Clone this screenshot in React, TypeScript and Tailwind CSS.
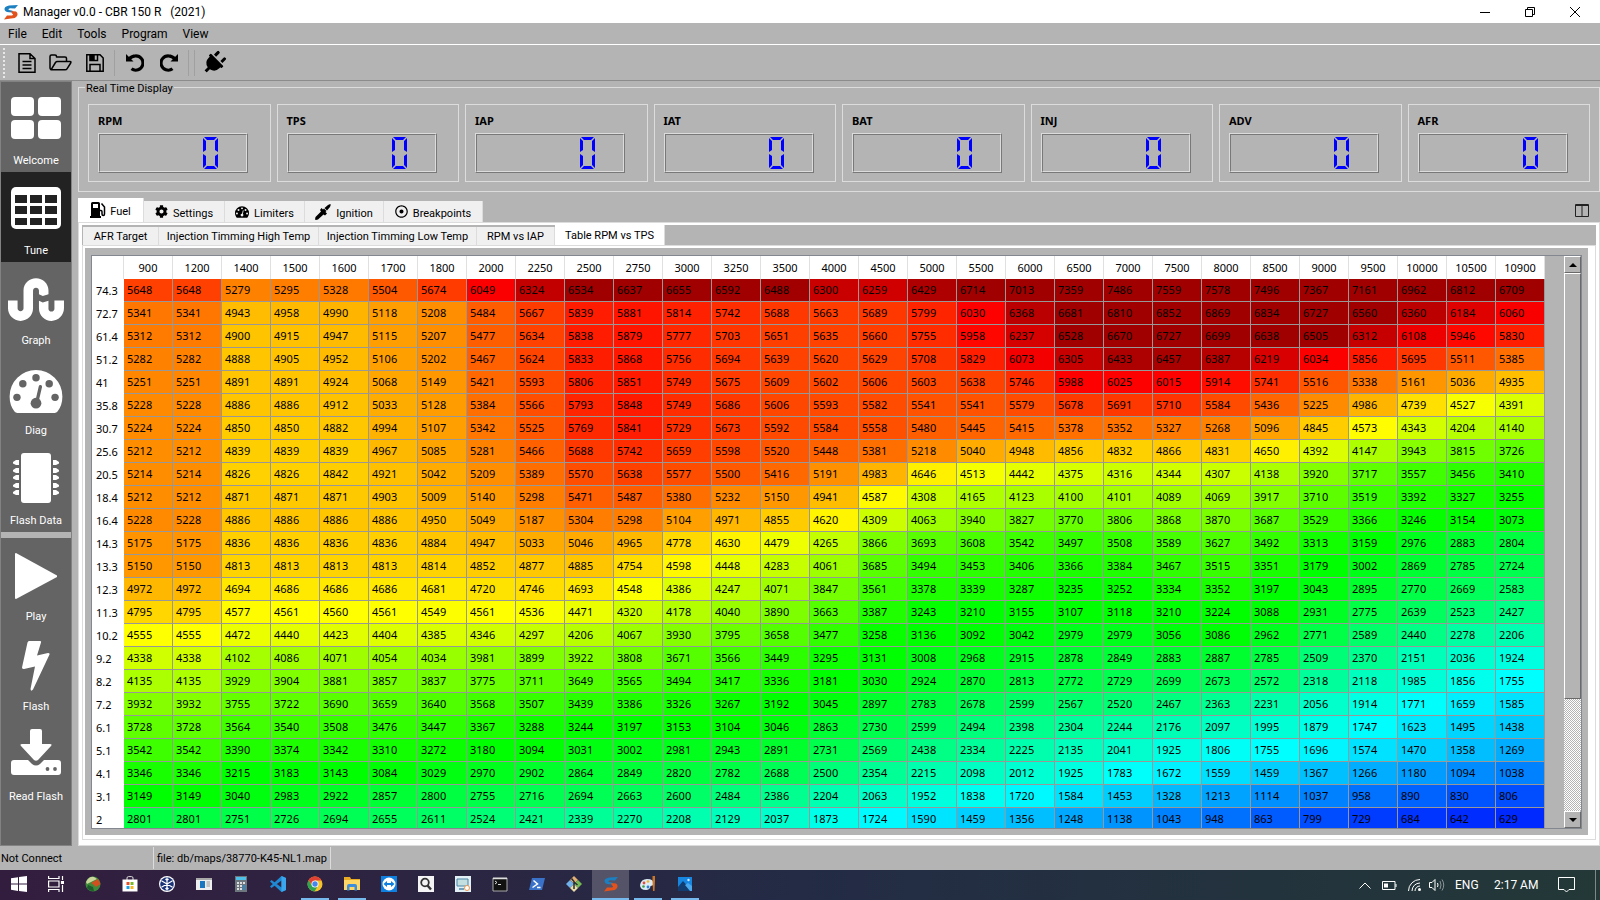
import type { ReactNode } from "react";
import { FaCog, FaPlug, FaRegDotCircle, FaStumbleupon } from "react-icons/fa";

const columns = [
  900, 1200, 1400, 1500, 1600, 1700, 1800, 2000, 2250, 2500, 2750, 3000, 3250, 3500, 4000, 4500, 5000, 5500, 6000,
  6500, 7000, 7500, 8000, 8500, 9000, 9500, 10000, 10500, 10900,
];

// first number is the TPS breakpoint, the rest are the fuel values per RPM
const fuelMap = `
74.3 5648 5648 5279 5295 5328 5504 5674 6049 6324 6534 6637 6655 6592 6488 6300 6259 6429 6714 7013 7359 7486 7559 7578 7496 7367 7161 6962 6812 6709
72.7 5341 5341 4943 4958 4990 5118 5208 5484 5667 5839 5881 5814 5742 5688 5663 5689 5799 6030 6368 6681 6810 6852 6869 6834 6727 6560 6360 6184 6060
61.4 5312 5312 4900 4915 4947 5115 5207 5477 5634 5838 5879 5777 5703 5651 5635 5660 5755 5958 6237 6528 6670 6727 6699 6638 6505 6312 6108 5946 5830
51.2 5282 5282 4888 4905 4952 5106 5202 5467 5624 5833 5868 5756 5694 5639 5620 5629 5708 5829 6073 6305 6433 6457 6387 6219 6034 5856 5695 5511 5385
41 5251 5251 4891 4891 4924 5068 5149 5421 5593 5806 5851 5749 5675 5609 5602 5606 5603 5638 5746 5988 6025 6015 5914 5741 5516 5338 5161 5036 4935
35.8 5228 5228 4886 4886 4912 5033 5128 5384 5566 5793 5848 5749 5686 5606 5593 5582 5541 5541 5579 5678 5691 5710 5584 5436 5225 4986 4739 4527 4391
30.7 5224 5224 4850 4850 4882 4994 5107 5342 5525 5769 5841 5729 5673 5592 5584 5558 5480 5445 5415 5378 5352 5327 5268 5096 4845 4573 4343 4204 4140
25.6 5212 5212 4839 4839 4839 4967 5085 5281 5466 5688 5742 5659 5598 5520 5448 5381 5218 5040 4948 4856 4832 4866 4831 4650 4392 4147 3943 3815 3726
20.5 5214 5214 4826 4826 4842 4921 5042 5209 5389 5570 5638 5577 5500 5416 5191 4983 4646 4513 4442 4375 4316 4344 4307 4138 3920 3717 3557 3456 3410
18.4 5212 5212 4871 4871 4871 4903 5009 5140 5298 5471 5487 5380 5232 5150 4941 4587 4308 4165 4123 4100 4101 4089 4069 3917 3710 3519 3392 3327 3255
16.4 5228 5228 4886 4886 4886 4886 4950 5049 5187 5304 5298 5104 4971 4855 4620 4309 4063 3940 3827 3770 3806 3868 3870 3687 3529 3366 3246 3154 3073
14.3 5175 5175 4836 4836 4836 4836 4884 4947 5033 5046 4965 4778 4630 4479 4265 3866 3693 3608 3542 3497 3508 3589 3627 3492 3313 3159 2976 2883 2804
13.3 5150 5150 4813 4813 4813 4813 4814 4852 4877 4885 4754 4598 4448 4283 4061 3685 3494 3453 3406 3366 3384 3467 3515 3351 3179 3002 2869 2785 2724
12.3 4972 4972 4694 4686 4686 4686 4681 4720 4746 4693 4548 4386 4247 4071 3847 3561 3378 3339 3287 3235 3252 3334 3352 3197 3043 2895 2770 2669 2583
11.3 4795 4795 4577 4561 4560 4561 4549 4561 4536 4471 4320 4178 4040 3890 3663 3387 3243 3210 3155 3107 3118 3210 3224 3088 2931 2775 2639 2523 2427
10.2 4555 4555 4472 4440 4423 4404 4385 4346 4297 4206 4067 3930 3795 3658 3477 3258 3136 3092 3042 2979 2979 3056 3086 2962 2771 2589 2440 2278 2206
9.2 4338 4338 4102 4086 4071 4054 4034 3981 3899 3922 3808 3671 3566 3449 3295 3131 3008 2968 2915 2878 2849 2883 2887 2785 2509 2370 2151 2036 1924
8.2 4135 4135 3929 3904 3881 3857 3837 3775 3711 3649 3565 3494 3417 3336 3181 3030 2924 2870 2813 2772 2729 2699 2673 2572 2318 2118 1985 1856 1755
7.2 3932 3932 3755 3722 3690 3659 3640 3568 3507 3439 3386 3326 3267 3192 3045 2897 2783 2678 2599 2567 2520 2467 2363 2231 2056 1914 1771 1659 1585
6.1 3728 3728 3564 3540 3508 3476 3447 3367 3288 3244 3197 3153 3104 3046 2863 2730 2599 2494 2398 2304 2244 2176 2097 1995 1879 1747 1623 1495 1438
5.1 3542 3542 3390 3374 3342 3310 3272 3180 3094 3031 3002 2981 2943 2891 2731 2569 2438 2334 2225 2135 2041 1925 1806 1755 1696 1574 1470 1358 1269
4.1 3346 3346 3215 3183 3143 3084 3029 2970 2902 2864 2849 2820 2782 2688 2500 2354 2215 2098 2012 1925 1783 1672 1559 1459 1367 1266 1180 1094 1038
3.1 3149 3149 3040 2983 2922 2857 2800 2755 2716 2694 2663 2600 2484 2386 2204 2063 1952 1838 1720 1584 1453 1328 1213 1114 1037 958 890 830 806
2 2801 2801 2751 2726 2694 2655 2611 2524 2421 2339 2270 2208 2129 2037 1873 1724 1590 1459 1356 1248 1138 1043 948 863 799 729 684 642 629`
  .trim()
  .split("\n")
  .map((line) => line.split(" "));

const stops: [number, number, number, number][] = [
  [600, 0, 36, 255],
  [729, 0, 60, 255],
  [948, 0, 112, 255],
  [1356, 0, 190, 255],
  [1755, 0, 255, 255],
  [2204, 0, 255, 176],
  [2801, 0, 255, 64],
  [3110, 0, 255, 0],
  [3220, 0, 255, 0],
  [3728, 96, 255, 0],
  [4338, 208, 255, 0],
  [4560, 255, 255, 0],
  [4795, 255, 214, 0],
  [5150, 255, 152, 0],
  [5648, 255, 64, 0],
  [5988, 255, 0, 0],
  [6040, 252, 0, 0],
  [6500, 160, 0, 0],
  [8000, 160, 0, 0],
];

function heat(value: number) {
  const i = Math.max(1, stops.findIndex((s) => s[0] >= value));
  const [a, b] = [stops[i - 1], stops[i]];
  const t = (value - a[0]) / (b[0] - a[0]);
  const mix = (n: number) => Math.round(a[n] + (b[n] - a[n]) * t);
  return `rgb(${mix(1)}, ${mix(2)}, ${mix(3)})`;
}

function AppLogo({ className }: { className: string }) {
  return (
    <svg viewBox="0 0 16 16" className={className} aria-hidden="true">
      <path d="M15 1 6 1.500Q1 2.500 1.500 5.500Q2 8 6 8.200L10 8.500 9.500 6.800 6 6Q4.500 5 7 4.200L12 4.500Z" fill="#1b7fc0" />
      <path d="M8 7 13 7.500Q15.500 9.500 14 12Q12.500 14.500 8 14.500L1 15.500 4 11.500 9 11.500Q11 10.500 9 9.500Z" fill="#e2521d" />
    </svg>
  );
}

function GaugeIcon({ className, hole }: { className: string; hole: string }) {
  return (
    <svg viewBox="0 0 54 44" className={className} aria-hidden="true">
      <path d="M27 0A27 27 0 0 0 0 27Q0 36 5 42.500Q6 44 8 44H46Q48 44 49 42.500Q54 36 54 27A27 27 0 0 0 27 0Z" fill="currentColor" />
      <g fill={hole}>
        <circle cx="7.500" cy="28" r="3.800" />
        <circle cx="13.500" cy="14" r="3.800" />
        <circle cx="27" cy="8" r="3.800" />
        <circle cx="40.500" cy="14" r="3.800" />
        <circle cx="46.500" cy="28" r="3.800" />
        <circle cx="27" cy="34" r="5.500" />
      </g>
      <path d="M28 32 31.500 17" stroke={hole} strokeWidth="3.400" strokeLinecap="round" />
    </svg>
  );
}

const sideItems: { name: string; active?: boolean; icon: ReactNode }[] = [
  {
    name: "Welcome",
    icon: (
      <svg viewBox="0 0 50 42" className="h-[42px] w-[50px]" fill="#fff">
        <rect width="23" height="19" rx="4" />
        <rect x="27" width="23" height="19" rx="4" />
        <rect y="23" width="23" height="19" rx="4" />
        <rect x="27" y="23" width="23" height="19" rx="4" />
      </svg>
    ),
  },
  {
    name: "Tune",
    active: true,
    icon: (
      <svg viewBox="0 0 50 42" className="h-[42px] w-[50px]">
        <rect width="50" height="42" rx="5" fill="#fff" />
        <path d="M4 8h12v8H4zM19 8h12v8H19zM34 8h12v8H34zM4 19h12v8H4zM19 19h12v8H19zM34 19h12v8H34zM4 31h12v7H4zM19 31h12v7H19zM34 31h12v7H34z" fill="#222" />
      </svg>
    ),
  },
  { name: "Graph", icon: <FaStumbleupon className="mt-1 size-[57px]" /> },
  { name: "Diag", icon: <GaugeIcon className="mt-2 h-[43px] w-[54px]" hole="#646464" /> },
  {
    name: "Flash Data",
    icon: (
      <svg viewBox="0 0 46 50" className="h-[50px] w-[46px]" fill="#fff">
        <rect x="8" width="30" height="50" rx="3" />
        <path d="M6 7v5H3L0 10.500V9L3 7zM6 15v5H3L0 18.500V17L3 15zM6 22v5H3L0 25.500V24L3 22zM6 30v5H3L0 33.500V32L3 30zM6 37v5H3L0 40.500V39L3 37zM40 7v5h3l3-1.500V9l-3-2zM40 15v5h3l3-1.500V17l-3-2zM40 22v5h3l3-1.500V24l-3-2zM40 30v5h3l3-1.500V32l-3-2zM40 37v5h3l3-1.500V39l-3-2z" />
      </svg>
    ),
  },
  {
    name: "Play",
    icon: (
      <svg viewBox="0 0 42 46" className="mt-1 h-[46px] w-[42px]" fill="#fff">
        <path d="M0 1Q0 0 1 0L42 22.500V24L1 46Q0 46 0 45Z" />
      </svg>
    ),
  },
  {
    name: "Flash",
    icon: (
      <svg viewBox="0 0 28 50" className="mt-1 h-[50px] w-[28px]" fill="#fff">
        <path d="M7 0H18Q19.500 0 19 1.500L15 14.500 26 12Q28 12 27.500 13.500L11 48.500Q9 51 8.500 48L13 25.500 2 28Q0 28 0 26.500L5.500 1.500Q6 0 7 0Z" />
      </svg>
    ),
  },
  {
    name: "Read Flash",
    icon: (
      <svg viewBox="0 0 50 46" className="mb-1 h-[46px] w-[50px]" fill="#fff">
        <path d="M19 2Q19 0 21 0H29Q31 0 31 2V15H39Q41.500 15 40 17L27 31Q25 32.500 23 31L10 17Q8.500 15 11 15H19Z" />
        <path d="M3 31H17L21 35Q25 38 29 35L33 31H47Q50 31 50 34V43Q50 46 47 46H3Q0 46 0 43V34Q0 31 3 31Z" />
        <circle cx="36.500" cy="40" r="1.900" fill="#646464" />
        <circle cx="44" cy="40" r="1.900" fill="#646464" />
      </svg>
    ),
  },
];

function SideButton({ name, icon, active }: { name: string; icon: ReactNode; active?: boolean }) {
  return (
    <button className={`flex h-[90px] w-full flex-col items-center ${active ? "bg-[#222]" : ""}`}>
      <span className="flex h-[71px] items-center">{icon}</span>
      <span className="leading-4">{name}</span>
    </button>
  );
}

function Lcd({ name }: { name: string }) {
  return (
    <div className="flex-1 border border-[#dcdcdc] px-[9px] py-2">
      <div id={name} className="font-['Noto_Sans',sans-serif] leading-4 font-bold">{name}</div>
      <div
        role="status"
        aria-labelledby={name}
        className="mt-1 h-10 w-[150px] border border-t-[#dcdcdc] border-r-[#787878] border-b-[#787878] border-l-[#dcdcdc]"
      >
        <div className="flex h-full items-center justify-end border border-t-[#787878] border-r-[#dcdcdc] border-b-[#dcdcdc] border-l-[#787878] pr-7">
          <svg viewBox="0 0 15 32" className="h-8 w-[15px]" fill="#0000ff" aria-label="0">
            <path d="M1 0H14L11 3H4ZM0 1 3 4V13L0 15ZM15 1 12 4V13L15 15ZM0 17 3 19V28L0 31ZM15 17 12 19V28L15 31ZM1 32H14L11 29H4Z" />
          </svg>
        </div>
      </div>
    </div>
  );
}

const mainTabs = [
  {
    name: "Fuel",
    width: "w-[66px]",
    icon: (
      <svg viewBox="0 0 16 16" className="size-4">
        <path d="M1 1.500Q1 0 2.500 0H8.500Q10 0 10 1.500V14H11V16H0V14H1Z" />
        <path d="M3 2H8V6H3Z" fill="#fff" />
        <path d="M10 8.500Q12 8 12 10V12Q12 13.500 13.300 13.500Q14.500 13.500 14.500 12V5L11.500 1.500" fill="none" stroke="#000" strokeWidth="1.500" />
      </svg>
    ),
  },
  { name: "Settings", width: "w-[81px]", icon: <FaCog className="size-[13px]" /> },
  { name: "Limiters", width: "w-[80px]", icon: <GaugeIcon className="h-3 w-[14px]" hole="#f0f0f0" /> },
  {
    name: "Ignition",
    width: "w-[79px]",
    icon: (
      <svg viewBox="0 0 16 16" className="size-4">
        <path d="M15.500 0Q16 1 15 3L12 6.500 9.500 4 13 1Q15 0 15.500 0ZM9 4.500 11.500 7 10.500 8 12 9.500 10 11.500 8.500 10.500 3 15.500 1 16 0 15.500 .5 13 6 7.500 5 6 6.500 4 8 5.500Z" />
      </svg>
    ),
  },
  { name: "Breakpoints", width: "w-[99px]", icon: <FaRegDotCircle className="size-[13px]" /> },
];

const subTabs = [
  { name: "AFR Target", width: "w-[76px]" },
  { name: "Injection Timming High Temp", width: "w-[160px]" },
  { name: "Injection Timming Low Temp", width: "w-[158px]" },
  { name: "RPM vs IAP", width: "w-[78px]" },
  { name: "Table RPM vs TPS", width: "w-[110px]" },
];

function FuelTable() {
  return (
    <table className="w-[1453px] shrink-0 table-fixed border-separate border-spacing-0 self-start font-['Noto_Sans',sans-serif]">
      <thead>
        <tr className="h-[23px] bg-white">
          <th className="w-8 border-r border-[#e0e0e0]" />
          {columns.map((rpm) => (
            <th key={rpm} scope="col" className="w-[49px] border-r border-[#e0e0e0] p-0 text-center font-normal">
              {rpm}
            </th>
          ))}
        </tr>
      </thead>
      <tbody>
        {fuelMap.map(([tps, ...values]) => (
          <tr key={tps} className="h-[23px]">
            <th scope="row" className="bg-white p-0 pl-1 text-left font-normal">{tps}</th>
            {values.map((v, i) => (
              <td key={i} className="border-r border-b border-[#989898] p-0 pl-[3px]" style={{ backgroundColor: heat(+v) }}>
                {v}
              </td>
            ))}
          </tr>
        ))}
      </tbody>
    </table>
  );
}

function ScrollBar() {
  const raised = "border border-t-white border-r-[#696969] border-b-[#696969] border-l-white bg-[#b4b4b4]";
  return (
    <div className="ml-auto flex w-[17px] flex-col bg-[repeating-conic-gradient(#fff_0_25%,#b4b4b4_0_50%)] bg-size-[2px_2px]">
      <button aria-label="Scroll up" className={`flex h-[17px] items-center justify-center ${raised}`}>
        <svg viewBox="0 0 8 4" className="h-1 w-2"><path d="M4 0 8 4H0Z" /></svg>
      </button>
      <div className={`h-[426px] ${raised}`} />
      <button aria-label="Scroll down" className={`mt-auto flex h-[17px] items-center justify-center ${raised}`}>
        <svg viewBox="0 0 8 4" className="h-1 w-2"><path d="M0 0H8L4 4Z" /></svg>
      </button>
    </div>
  );
}

const taskIcons: { name: string; open?: boolean; active?: boolean; icon: ReactNode }[] = [
  { name: "Start", icon: <path d="M0 2.300 7 1.200V7.600H0ZM8 1 16 0V7.600H8ZM0 8.500H7V14.900L0 13.800ZM8 8.500H16V16L8 15Z" fill="#fff" /> },
  {
    name: "Task View",
    icon: (
      <g fill="none" stroke="#fff" strokeWidth="1.200">
        <path d="M.6 0V2.500H11V0M.6 16V13.500H11V16M.6 5H11V11H.6ZM14.500 0V4M14.500 9V16" />
        <path d="M13.500 5.500h2v2h-2z" fill="#fff" />
      </g>
    ),
  },
  {
    name: "Globe",
    icon: (
      <>
        <circle cx="8" cy="8" r="7.500" fill="#3d8a3a" />
        <path d="M1 6Q4 0 9 1L12 3 6 6 2 8Z" fill="#c9d59b" />
        <path d="M6 7 13 3 15.500 8 11 11 9 9Z" fill="#d0501f" />
        <path d="M3 9 8 11 9 15Q4 15 2 12Z" fill="#1d5b2c" />
      </>
    ),
  },
  {
    name: "Store",
    icon: (
      <>
        <path d="M5 4V2Q5 .6 6.500 .6H9.500Q11 .6 11 2V4" fill="none" stroke="#ddd" />
        <path d="M.5 3.500H15.500V15.500H.5Z" fill="#fff" />
        <path d="M4.500 6H7.500V9H4.500Z" fill="#e5512a" />
        <path d="M8.500 6H11.500V9H8.500Z" fill="#7bb829" />
        <path d="M4.500 10H7.500V13H4.500Z" fill="#1ba1e8" />
        <path d="M8.500 10H11.500V13H8.500Z" fill="#f7b51e" />
      </>
    ),
  },
  {
    name: "Yamaha Diagnostic",
    icon: (
      <>
        <circle cx="8" cy="8" r="8" fill="#fff" />
        <circle cx="8" cy="8" r="6.800" fill="#1b3377" />
        <path d="M8 1.500V14.500M2.400 4.800 13.600 11.200M2.400 11.200 13.600 4.800M6.500 3 8 4.500 9.500 3M6.500 13 8 11.500 9.500 13" fill="none" stroke="#fff" strokeWidth="1.200" />
      </>
    ),
  },
  {
    name: "Viewer",
    icon: (
      <>
        <path d="M0 2H16V14H0Z" fill="#eee" />
        <path d="M0 2H16V4H0Z" fill="#aaa" />
        <path d="M4 5H9V12H4Z" fill="#1877c0" />
        <path d="M10.500 6H14M10.500 8H14M10.500 10H14" stroke="#999" />
      </>
    ),
  },
  {
    name: "Calculator",
    icon: (
      <>
        <path d="M2 0H14V16H2Z" fill="#6d767d" />
        <path d="M3 1H13V4H3Z" fill="#4fc0e8" />
        <path d="M4 7H12M4 10H12M4 13H12" stroke="#ddd" strokeWidth="1.800" strokeDasharray="2 1" />
        <path d="M10 9H12V14H10Z" fill="#3087c5" />
      </>
    ),
  },
  {
    name: "Visual Studio Code",
    icon: (
      <>
        <path d="M11.500 0 16 2V14L11.500 16 0 5.500 1.500 4 11.500 11.500V4.500L1.500 12 0 10.500Z" fill="#1f8ad2" />
        <path d="M11.500 0 16 2V14L11.500 16Z" fill="#3ba5ee" />
      </>
    ),
  },
  {
    name: "Chrome",
    open: true,
    icon: (
      <>
        <circle cx="8" cy="8" r="7.500" fill="#f5c32c" />
        <path d="M1.500 4.200A7.500 7.500 0 0 1 14.500 4.500H8L5 9Z" fill="#df4232" />
        <path d="M1.500 4.200A7.500 7.500 0 0 0 7.500 15.500L10.500 10.500 5 9.500Z" fill="#2fa350" />
        <circle cx="8" cy="8" r="3.500" fill="#fff" />
        <circle cx="8" cy="8" r="2.700" fill="#4486ee" />
      </>
    ),
  },
  {
    name: "File Explorer",
    open: true,
    icon: (
      <>
        <path d="M0 1H6L7 3H16V14H0Z" fill="#e8ac24" />
        <path d="M0 4H16V14H0Z" fill="#ffd766" />
        <path d="M3 14.500V10Q3 8 5 8H11Q13 8 13 10V14.500H10.500V11H5.500V14.500Z" fill="#3d8fdd" />
      </>
    ),
  },
  {
    name: "TeamViewer",
    icon: (
      <>
        <path d="M0 0H16V16H0Z" fill="#0f7fe0" />
        <circle cx="8" cy="8" r="6.500" fill="#fff" />
        <path d="M2.500 8 6 5V7H10V5L13.500 8 10 11V9H6V11Z" fill="#0f7fe0" />
      </>
    ),
  },
  {
    name: "Search",
    icon: (
      <>
        <path d="M0 0H16V16H0Z" fill="#f4f4f4" />
        <circle cx="7" cy="6.500" r="3.800" fill="none" stroke="#333" strokeWidth="1.800" />
        <path d="M9.500 9.500 13 13.500" stroke="#333" strokeWidth="2.400" />
      </>
    ),
  },
  {
    name: "Remote Desktop",
    icon: (
      <>
        <path d="M0 0H16V16H0Z" fill="#e2f0f5" />
        <path d="M2 3H13V10H2Z" fill="#c3dfe0" stroke="#4a86a8" />
        <path d="M4 13H9" stroke="#4a86a8" strokeWidth="1.500" />
        <circle cx="12" cy="12" r="2.500" fill="#fff" stroke="#ef9950" />
      </>
    ),
  },
  {
    name: "Command Prompt",
    icon: (
      <>
        <path d="M1 2H15V15H1Z" fill="#111" stroke="#aaa" />
        <path d="M1 2.500H15" stroke="#ddd" strokeWidth="1.500" />
        <path d="M3 5 5 6.500 3 8M6 8.500H9" fill="none" stroke="#ddd" />
      </>
    ),
  },
  {
    name: "PowerShell",
    icon: (
      <>
        <path d="M3 2H16L13 14H0Z" fill="#3a72c9" />
        <path d="M4.500 4.500 8.500 8 3.500 11.500M8 11.500H11.500" fill="none" stroke="#fff" strokeWidth="1.500" />
      </>
    ),
  },
  {
    name: "Git",
    icon: (
      <>
        <path d="M8 0 12 4 8 8 4 4Z" fill="#e2b176" />
        <path d="M4 4 8 8 4 12 0 8Z" fill="#71b0e8" />
        <path d="M12 4 16 8 12 12 8 8Z" fill="#78b957" />
        <path d="M8 8 12 12 8 16 4 12Z" fill="#e8dcab" />
        <path d="M5.500 2.500 8 5.500V13M8 6 11.500 9" fill="none" stroke="#2b2b33" strokeWidth="1.500" />
      </>
    ),
  },
  { name: "Manager", open: true, active: true, icon: <AppLogo className="size-4" /> },
  {
    name: "Paint",
    open: true,
    icon: (
      <>
        <path d="M7 3Q14 3 13.500 8Q13 10 10.500 10Q10 14 6 14Q0 14 0 9Q1 3 7 3Z" fill="#dcebf5" />
        <circle cx="4" cy="7" r="1.400" fill="#e34b3a" />
        <circle cx="8" cy="5.500" r="1.300" fill="#f4b527" />
        <circle cx="3.500" cy="10.500" r="1.300" fill="#3b9e47" />
        <circle cx="8" cy="11" r="1.400" fill="#2d80d5" />
        <path d="M12.500 0H15V5L14.500 15H13L12.500 5Z" fill="#c9772b" />
      </>
    ),
  },
  {
    name: "Photos",
    open: true,
    icon: (
      <>
        <path d="M1 1H15V15H1Z" fill="#1686e0" />
        <path d="M1 11 6 5 15 15H1Z" fill="#123d70" />
        <path d="M8 9 11 7 15 10V15H13Z" fill="#4aa8ee" />
        <circle cx="11.500" cy="4" r="1.200" fill="#cde9ff" />
      </>
    ),
  },
];

export default function App() {
  return (
    <div className="flex h-screen flex-col overflow-hidden bg-[#b4b4b4] font-[Roboto,sans-serif] text-[11px] leading-4 text-black">
      <header className="flex h-[23px] shrink-0 items-center bg-white pl-[3px] text-xs">
        <AppLogo className="size-4" />
        <h1 className="ml-1 whitespace-pre">Manager v0.0 - CBR 150 R   (2021)</h1>
        <div className="ml-auto flex">
          <button aria-label="Minimize" className="flex h-[22px] w-[45px] items-center justify-center">
            <svg viewBox="0 0 10 10" className="size-[10px]"><path d="M0 5.500H10" stroke="#000" /></svg>
          </button>
          <button aria-label="Restore" className="flex h-[22px] w-[45px] items-center justify-center">
            <svg viewBox="0 0 10 10" className="size-[10px]" fill="none" stroke="#000">
              <path d="M.5 2.500H7.500V9.500H.5ZM2.500 2.500V.5H9.500V7.500H7.500" />
            </svg>
          </button>
          <button aria-label="Close" className="mr-[2px] flex h-[22px] w-[46px] items-center justify-center">
            <svg viewBox="0 0 10 10" className="size-[10px]" stroke="#000"><path d="M0 0 10 10M10 0 0 10" /></svg>
          </button>
        </div>
      </header>

      <nav className="flex h-[22px] shrink-0 items-center gap-[15px] border-b border-white px-2 text-xs">
        <button>File</button>
        <button>Edit</button>
        <button>Tools</button>
        <button>Program</button>
        <button>View</button>
      </nav>

      <div className="flex h-9 shrink-0 items-center border-b border-[#8c8c8c] pl-[3px]">
        <div className="h-[30px] border-l-2 border-dotted border-[#e8e8e8]" />
        <button aria-label="New" className="ml-[13px]">
          <svg viewBox="0 0 18 20" className="h-5 w-[18px]" fill="none" stroke="#000" strokeWidth="1.500">
            <path d="M1 .8H12L17 5.500V19.200H1ZM12 .8V5.500H17M4.500 8.500H13.500M4.500 12H13.500M4.500 15.500H13.500" />
          </svg>
        </button>
        <button aria-label="Open" className="ml-[13px]">
          <svg viewBox="0 0 23 17" className="h-[17px] w-[23px]" fill="none" stroke="#000" strokeWidth="1.500" strokeLinejoin="round">
            <path d="M2 15.500Q1 15 1 14V2.500Q1 1 2.500 1H6Q7.500 1 7.500 2.500V3H16Q17.500 3 17.500 4.500V7" />
            <path d="M2 15.800 6.500 8.500Q7 7.500 8.500 7.500H21Q22.500 7.500 21.700 9L18 14.800Q17.500 15.800 16 15.800Z" />
          </svg>
        </button>
        <button aria-label="Save" className="ml-[14px]">
          <svg viewBox="0 0 18 18" className="size-[18px]" fill="none" stroke="#000" strokeWidth="1.500">
            <path d="M.8 .8H14L17.200 4V17.200H.8ZM4 17V10.500H14V17" />
            <path d="M4 .8V6.500H11.500V.8" />
            <path d="M4.500 1H8V6H4.500Z" fill="#000" />
          </svg>
        </button>
        <div className="ml-[10px] h-[26px] border-l border-[#a0a0a0]" />
        <button aria-label="Undo" className="ml-[11px]">
          <svg viewBox="0 0 18 18" className="size-[18px]">
            <path d="M3 5Q6 1.800 9.500 1.800A7.200 7.200 0 1 1 5.500 14.800" fill="none" stroke="#000" strokeWidth="3.200" />
            <path d="M0 0V7.500H7.500Z" />
          </svg>
        </button>
        <button aria-label="Redo" className="ml-4">
          <svg viewBox="0 0 18 18" className="size-[18px]">
            <path d="M15 5Q12 1.800 8.500 1.800A7.200 7.200 0 1 0 12.500 14.800" fill="none" stroke="#000" strokeWidth="3.200" />
            <path d="M18 0V7.500H10.500Z" />
          </svg>
        </button>
        <div className="ml-[10px] h-[26px] w-[7px] border-x border-[#a0a0a0]" />
        <button aria-label="Connect" className="ml-[7px]"><FaPlug className="size-6 rotate-45" /></button>
      </div>

      <div className="flex min-h-0 flex-1">
        <aside className="flex w-[72px] shrink-0 flex-col border border-[#828282] bg-[#646464] text-white">
          {sideItems.slice(0, 5).map((item) => <SideButton key={item.name} {...item} />)}
          <div className="h-[6px] shrink-0 bg-[#b4b4b4]" />
          {sideItems.slice(5).map((item) => <SideButton key={item.name} {...item} />)}
        </aside>

        <main className="ml-[6px] flex min-w-0 flex-1 flex-col">
          <fieldset className="h-[111px] shrink-0 border border-[#dcdcdc] px-[9px]">
            <legend className="-ml-[3px] h-3 px-px leading-4">Real Time Display</legend>
            <div className="mt-[11px] flex gap-[6px]">
              {["RPM", "TPS", "IAP", "IAT", "BAT", "INJ", "ADV", "AFR"].map((name) => <Lcd key={name} name={name} />)}
            </div>
          </fieldset>

          <div className="mt-[2px] flex h-7 shrink-0 items-end">
            {mainTabs.map((tab, i) => (
              <button
                key={tab.name}
                className={`flex items-center justify-center border-r border-[#dcdcdc] ${tab.width} ${
                  i === 0 ? "h-6 gap-1 bg-white" : "h-[21px] gap-[5px] bg-[#f0f0f0]"
                }`}
              >
                {tab.icon}
                <span className="pt-1">{tab.name}</span>
              </button>
            ))}
            <button aria-label="Split view" className="mr-[11px] mb-[5px] ml-auto">
              <svg viewBox="0 0 14 13" className="h-[13px] w-[14px]" fill="none" stroke="#222">
                <path d="M.5 .5H13.500V12.500H.5ZM7 1V12.500M1 1.500H13" />
              </svg>
            </button>
          </div>

          <div className="flex min-h-0 flex-1 flex-col border border-[#dcdcdc] bg-white p-[3px] pt-[2px] pb-[5px]">
            <div className="flex h-5 shrink-0 items-end bg-[#b4b4b4] pl-px">
              {subTabs.map((tab, i) => (
                <button
                  key={tab.name}
                  className={`border-r border-[#dcdcdc] pt-[2px] ${tab.width} ${i === 4 ? "h-5 bg-white" : "h-[18px] bg-[#f0f0f0]"}`}
                >
                  {tab.name}
                </button>
              ))}
            </div>
            <div className="flex min-h-0 flex-1 border border-[#dcdcdc] bg-white p-[2px] pr-[7px] pb-1">
              <div className="flex min-w-0 flex-1 bg-[#b4b4b4] px-[6px] pt-[7px] pb-[6px]">
                <div className="flex min-w-0 flex-1 overflow-hidden border border-[#828790]">
                  <FuelTable />
                  <ScrollBar />
                </div>
              </div>
            </div>
          </div>
        </main>
      </div>

      <footer className="flex h-6 shrink-0 items-center">
        <span className="w-[153px] pt-[2px] pl-px">Not Connect</span>
        <span className="border-x border-[#dcdcdc] px-[3px] pt-[2px] leading-5">file: db/maps/38770-K45-NL1.map</span>
      </footer>

      <div className="flex h-[30px] shrink-0 bg-linear-to-r from-[#331d3e] via-[#232b45] to-[#233837] text-xs text-white">
        {taskIcons.map((task) => (
          <button
            key={task.name}
            aria-label={task.name}
            className={`flex w-[37px] justify-center border-b-2 ${task.active ? "border-[#76b9ed] bg-[#555368]" : "border-transparent"}`}
          >
            <span className={`flex h-[30px] w-7 shrink-0 items-center justify-center border-b-2 ${task.open ? "border-[#76b9ed]" : "border-transparent"}`}>
              <svg viewBox="0 0 16 16" className="size-4">{task.icon}</svg>
            </span>
          </button>
        ))}
        <div className="ml-auto flex items-center">
          <svg viewBox="0 0 12 7" className="h-[7px] w-3" fill="none" stroke="#fff"><path d="M.5 6.500 6 1 11.500 6.500" /></svg>
          <svg viewBox="0 0 15 9" className="ml-[11px] h-[9px] w-[15px]" fill="none" stroke="#fff">
            <path d="M.5 .5H13V8.500H.5Z" />
            <path d="M2 2.500H6V6.500H2ZM13.500 3H14.500V6H13.500Z" fill="#fff" stroke="none" />
          </svg>
          <svg viewBox="0 0 13 12" className="ml-[11px] h-3 w-[13px]" fill="none" stroke="#fff">
            <path d="M.5 12A11.500 11.500 0 0 1 12 .5M4 12A8 8 0 0 1 12 4M7 12A5 5 0 0 1 12 7" />
            <circle cx="11.500" cy="10.500" r="1.500" fill="#fff" stroke="none" />
          </svg>
          <svg viewBox="0 0 16 14" className="ml-2 h-[14px] w-4" fill="none" stroke="#fff">
            <path d="M.5 4.500H3L6 1.500V12.500L3 9.500H.5Z" />
            <path d="M8.500 5Q9.500 7 8.500 9" />
            <path d="M11 3Q13 7 11 11M13 1.500Q16.500 7 13 12.500" stroke="#8b9599" />
          </svg>
          <span className="ml-[10px] w-[39px]">ENG</span>
          <span className="w-[64px] whitespace-nowrap">2:17 AM</span>
          <svg viewBox="0 0 17 16" className="h-4 w-[17px]" fill="none" stroke="#fff"><path d="M.5 .5H16.500V12.500H11L8.500 15 6 12.500H.5Z" /></svg>
          <div className="mr-1 ml-5 h-[30px] border-l border-[#7d888a]" />
        </div>
      </div>
    </div>
  );
}
